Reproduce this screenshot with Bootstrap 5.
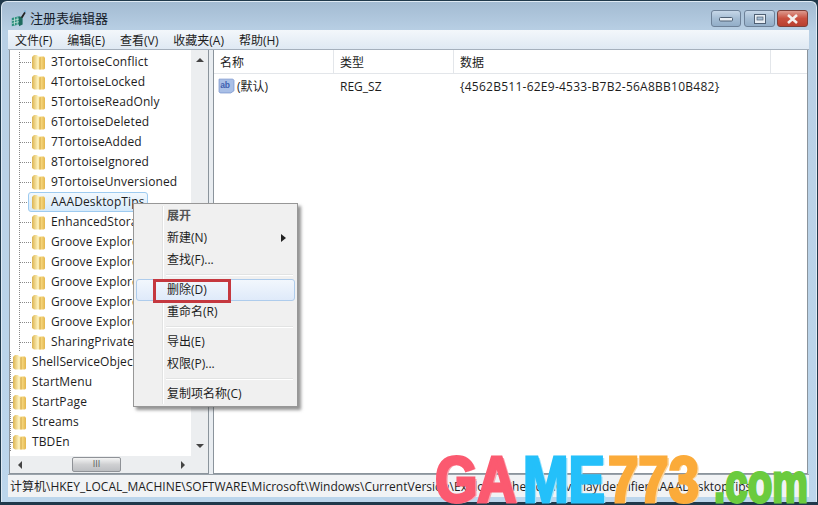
<!DOCTYPE html>
<html lang="zh-CN">
<head>
<meta charset="UTF-8">
<title>注册表编辑器</title>
<link href="https://cdn.jsdelivr.net/npm/bootstrap@5.3.3/dist/css/bootstrap.min.css" rel="stylesheet">
<style>
  html, body { height: 100%; margin: 0; overflow: hidden; }
  body { font-family: "Open Sans", "Noto Sans CJK SC", sans-serif; font-size: 12px; color: #1d1d1d; background: #1e3a4e; }
  .win { width: 818px; height: 505px; padding: 1px 1px 0; background: #20394b; }
  .frame { height: 501px; border-radius: 6px 6px 0 0; background: linear-gradient(#a3bbd2, #b9d0e5 30px, #bcd6ec 100%); border: 1px solid #dfeaf4; border-bottom: 0; padding: 0 8px 5px 7px; }
  .titlebar { height: 28px; padding-left: 1px; padding-top: 8px; }
  .title-text { font-size: 13px; margin-left: 2px; color: #16202a; line-height: 17px; }
  .capbtn { height: 17px; border: 1px solid #6d8198; border-radius: 3px; background: linear-gradient(#c6d7e8, #a5bdd4 50%, #93aec8); }
  .capbtn-min { width: 30px; margin-right: 3px; }
  .capbtn-max { width: 31px; margin-right: 2px; }
  .capbtn-close { width: 31px; border-color: #7d3f38; background: linear-gradient(#dd9a8e, #c9503f 50%, #b9402f); }
  .menubar { height: 20px; background: linear-gradient(#f3f7fb, #dfe9f3); margin: 0 -1px; padding-left: 7px; gap: 15px; font-size: 12px; line-height: 21px; border-bottom: 1px solid #a5b0bc; }
  .panes { height: 424px; background: #e9edf1; }
  .treepane { width: 200px; border: 1px solid #8b949c; border-top: 0; background: #fff; }
  .splitgap { width: 4px; }
  .listpane { flex: 1; border: 1px solid #8b949c; border-top: 0; background: #fff; min-width: 0; }
  .treescroll { width: 181px; overflow: hidden; padding-top: 2px; }
  .treerow { height: 20px; line-height: 20px; white-space: nowrap; flex: none; letter-spacing: .13px; background: repeating-linear-gradient(#888 0 1px, transparent 1px 2px) 0 0 / 1px 100% no-repeat; }
  .guide { width: 12px; flex: none; border-bottom: 1px dotted #888; height: 11px; margin-bottom: 9px; }
  .lvl2 { padding-left: 9px; background-position: 9px 0; }
  .lvl1 .guide { width: 2px; }
  .folder { width: 15px; height: 16px; flex: none; margin: 0 5px 0 0; }
  .treesel { background: linear-gradient(#f2f8fd, #d6eafb); border: 1px solid #9ecbf0; border-radius: 3px; padding: 0 2px 0 2px; margin-left: -3px; height: 20px; line-height: 18px; }
  .vscroll { width: 17px; background: #eceef0; }
  .hscroll { height: 17px; background: #eceef0; }
  .thumb { width: 49px; height: 15px; margin-left: 50px; background: linear-gradient(#f4f4f4, #cfd0d2 50%, #bdbfc2); border: 1px solid #8f9297; border-radius: 2px; color: #555; line-height: 11px; font-size: 9px; }
  .arrow-up { width: 0; height: 0; border: 4px solid transparent; border-bottom: 4px solid #444; border-top: 0; }
  .arrow-down { width: 0; height: 0; border: 4px solid transparent; border-top: 4px solid #444; border-bottom: 0; }
  .arrow-left { width: 0; height: 0; border: 4px solid transparent; border-right: 4px solid #444; border-left: 0; }
  .arrow-right { width: 0; height: 0; border: 4px solid transparent; border-left: 4px solid #444; border-right: 0; margin-right: 19px; }
  .lhead { height: 24px; background: #fff; border-bottom: 1px solid #e3e6ea; line-height: 25px; }
  .lcol { border-right: 1px solid #e3e6ea; padding-left: 6px; flex: none; }
  .lc1 { width: 120px; }
  .lc2 { width: 120px; }
  .lc3 { width: 317px; }
  .lrow { height: 20px; line-height: 20px; padding: 3px 0 0 4px; box-sizing: content-box; }
  .lrow span { flex: none; }
  .abicon { width: 17px; height: 17px; flex: none; margin-right: 2px; }
  .ln1 { width: 103px; }
  .ln2 { width: 120px; }
  .lndata { letter-spacing: .25px; }
  .statusbar { height: 23px; line-height: 24px; background: #f1f3f5; margin: 0 -1px; border-top: 1px solid #9aa3ab; padding-left: 2px; white-space: nowrap; overflow: hidden; font-size: 12px; }
  .ctxmenu { position: absolute; left: 133px; top: 203px; width: 165px; height: 204px; background: #f0f0f0; border: 1px solid #979797; box-shadow: 3px 3px 3px rgba(60,60,60,.55); padding: 1px 2px; z-index: 5; }
  .ctxmenu::before { content: ""; position: absolute; left: 28px; top: 2px; bottom: 2px; border-left: 1px solid #e2e3e3; border-right: 1px solid #fff; }
  .ctxitem { height: 22px; line-height: 22px; padding-left: 31px; position: relative; font-size: 12px; }
  .ctxitem b { font-weight: 600; color: #555; }
  .ctxsel { background: linear-gradient(#f2f7fd, #dfeafa); border: 1px solid #aeccec; border-radius: 3px; line-height: 20px; padding-left: 30px; }
  .ctxsep { height: 2px; margin: 3px 2px 3px 30px; background: #e2e3e3; border-bottom: 1px solid #fff; position: relative; }
  .ctxarrow { position: absolute; right: 9px; top: 7px; width: 0; height: 0; border: 4px solid transparent; border-left: 5px solid #222; border-right: 0; }
  .redbox { position: absolute; left: 153px; top: 279px; width: 78px; height: 24px; border: 3px solid #c5383f; z-index: 6; }
  .wmpart { position: absolute; font-family: "Liberation Sans", sans-serif; font-weight: 700; white-space: nowrap; transform-origin: left top; z-index: 7; line-height: 1; font-size: 65px; top: 447px; -webkit-text-stroke: 3px currentColor; transform: scaleX(.84); }
  .wm-g { left: 435px; color: #fb5a70; text-shadow: 3px 1px 0 #f9a7b3; }
  .wm-a { left: 477px; color: #fb5a70; text-shadow: 3px 1px 0 #f9a7b3; }
  .wm-me { left: 523px; color: #24c0fa; text-shadow: 3px 1px 0 #9fe3fc; }
  .wm-773 { left: 608px; color: #fbab3a; text-shadow: 3px 1px 0 #fbd8a4; }
  .wm-com { left: 714px; top: 455px; font-size: 56px; color: #6bcb3e; transform: scaleX(.72); }
</style>
</head>
<body>
<svg width="0" height="0" class="position-absolute">
  <defs>
    <linearGradient id="fldfill" x1="0" y1="0" x2="1" y2="0">
      <stop offset="0" stop-color="#dcb451"/>
      <stop offset=".45" stop-color="#fdf2bd"/>
      <stop offset=".7" stop-color="#f6d67c"/>
      <stop offset="1" stop-color="#e3b64e"/>
    </linearGradient>
    <symbol id="fld" viewBox="0 0 15 16">
      <path d="M1 3 3 1h3l1.500 1.500H13l1 1.500v10.500l-1 1H3l-2-1.500z" fill="url(#fldfill)"/>
      <path d="M8.500 3.500 9.500 3v12.500H8.500z" fill="#cf9f38"/>
    </symbol>
  </defs>
</svg>

<div class="win position-relative">
  <div class="frame d-flex flex-column">
    <div class="titlebar d-flex">
      <svg width="18" height="18" viewBox="0 0 18 20">
        <path d="M1 9l8-2v9l-8 2z" fill="#2b8f7e"/>
        <path d="M9 7l4 1v8l-4 2z" fill="#1e6a5e"/>
        <path d="M1 12l8-2M1 15l8-2M4 8v9M7 8v9" stroke="#cfe9e2" stroke-width=".8" fill="none"/>
        <path d="M11 8l4-6 1.500 1-3.500 6z" fill="#222"/>
        <path d="M14 1l2-1 1 2-1 1z" fill="#7bb4d8"/>
      </svg>
      <span class="title-text">注册表编辑器</span>
      <div class="ms-auto d-flex align-items-start">
        <div class="capbtn capbtn-min d-flex align-items-center justify-content-center"><svg width="14" height="6" viewBox="0 0 14 6"><rect x=".5" y="1.500" width="13" height="3.500" rx="1" fill="#e8eef4" stroke="#4f6074"/></svg></div>
        <div class="capbtn capbtn-max d-flex align-items-center justify-content-center"><svg width="12" height="10" viewBox="0 0 12 10"><rect x=".5" y=".5" width="11" height="9" fill="#e8eef4" stroke="#4f6074"/><rect x="3" y="3" width="6" height="3" fill="#a5bdd4" stroke="#4f6074" stroke-width=".7"/></svg></div>
        <div class="capbtn capbtn-close d-flex align-items-center justify-content-center"><svg width="13" height="10" viewBox="0 0 13 10"><path d="M2 1l9 8M11 1l-9 8" stroke="#f5f0ee" stroke-width="2.600" fill="none"/></svg></div>
      </div>
    </div>

    <div class="menubar d-flex">
      <span>文件(F)</span><span>编辑(E)</span><span>查看(V)</span><span>收藏夹(A)</span><span>帮助(H)</span>
    </div>

    <div class="panes d-flex">
      <div class="treepane d-flex flex-column">
        <div class="d-flex flex-grow-1 overflow-hidden">
          <div class="treescroll d-flex flex-column" id="tree"></div>
          <div class="vscroll d-flex flex-column justify-content-between align-items-center py-2">
            <div class="arrow-up"></div>
            <div class="arrow-down"></div>
          </div>
        </div>
        <div class="hscroll d-flex align-items-center px-1 flex-none">
          <div class="arrow-left ms-1"></div>
          <div class="thumb text-center">III</div>
          <div class="arrow-right ms-auto"></div>
        </div>
      </div>
      <div class="splitgap"></div>
      <div class="listpane">
        <div class="lhead d-flex">
          <div class="lcol lc1">名称</div>
          <div class="lcol lc2">类型</div>
          <div class="lcol lc3">数据</div>
        </div>
        <div class="lrow d-flex align-items-start">
          <svg class="abicon" viewBox="0 0 16 16">
            <path d="M1 2h13l1 1v10l-3 2H2l-1-1z" fill="#a9bfe6" stroke="#7f9ad0" stroke-width=".8"/>
            <text x="2" y="10" font-size="8" font-weight="700" fill="#3f5fb0" font-family="Liberation Sans">ab</text>
          </svg>
          <span class="ln1">(默认)</span>
          <span class="ln2">REG_SZ</span>
          <span class="lndata">{4562B511-62E9-4533-B7B2-56A8BB10B482}</span>
        </div>
      </div>
    </div>

    <div class="statusbar">计算机\HKEY_LOCAL_MACHINE\SOFTWARE\Microsoft\Windows\CurrentVersion\Explorer\ShellIconOverlayIdentifiers\AAADesktopTips</div>
  </div>

  <div class="ctxmenu">
    <div class="ctxitem"><b>展开</b></div>
    <div class="ctxitem">新建(N)<span class="ctxarrow"></span></div>
    <div class="ctxitem">查找(F)...</div>
    <div class="ctxsep"></div>
    <div class="ctxitem ctxsel">删除(D)</div>
    <div class="ctxitem">重命名(R)</div>
    <div class="ctxsep"></div>
    <div class="ctxitem">导出(E)</div>
    <div class="ctxitem">权限(P)...</div>
    <div class="ctxsep"></div>
    <div class="ctxitem">复制项名称(C)</div>
  </div>
  <div class="redbox"></div>

  <span class="wmpart wm-g">G</span>
  <span class="wmpart wm-a">A</span>
  <span class="wmpart wm-me">ME</span>
  <span class="wmpart wm-773">773</span>
  <span class="wmpart wm-com">.com</span>
</div>

<script src="https://cdn.jsdelivr.net/npm/bootstrap@5.3.3/dist/js/bootstrap.bundle.min.js"></script>
<script>
  const rows = [
    [2, "3TortoiseConflict"], [2, "4TortoiseLocked"], [2, "5TortoiseReadOnly"], [2, "6TortoiseDeleted"],
    [2, "7TortoiseAdded"], [2, "8TortoiseIgnored"], [2, "9TortoiseUnversioned"], [2, "AAADesktopTips", true],
    [2, "EnhancedStorageShell"], [2, "Groove Explorer Icon"], [2, "Groove Explorer Icon"], [2, "Groove Explorer Icon"],
    [2, "Groove Explorer Icon"], [2, "Groove Explorer Icon"], [2, "SharingPrivate"],
    [1, "ShellServiceObjects"], [1, "StartMenu"], [1, "StartPage"], [1, "Streams"], [1, "TBDEn"]
  ];
  document.getElementById("tree").innerHTML = rows.map(r => {
    const icon = `<svg class="folder"><use href="#fld"/></svg>`;
    const body = r[2]
      ? `<span class="treesel d-flex align-items-center">${icon}<span>${r[1]}</span></span>`
      : `${icon}<span>${r[1]}</span>`;
    return `<div class="treerow d-flex align-items-center lvl${r[0]}"><span class="guide"></span>${body}</div>`;
  }).join("");
</script>
</body>
</html>
